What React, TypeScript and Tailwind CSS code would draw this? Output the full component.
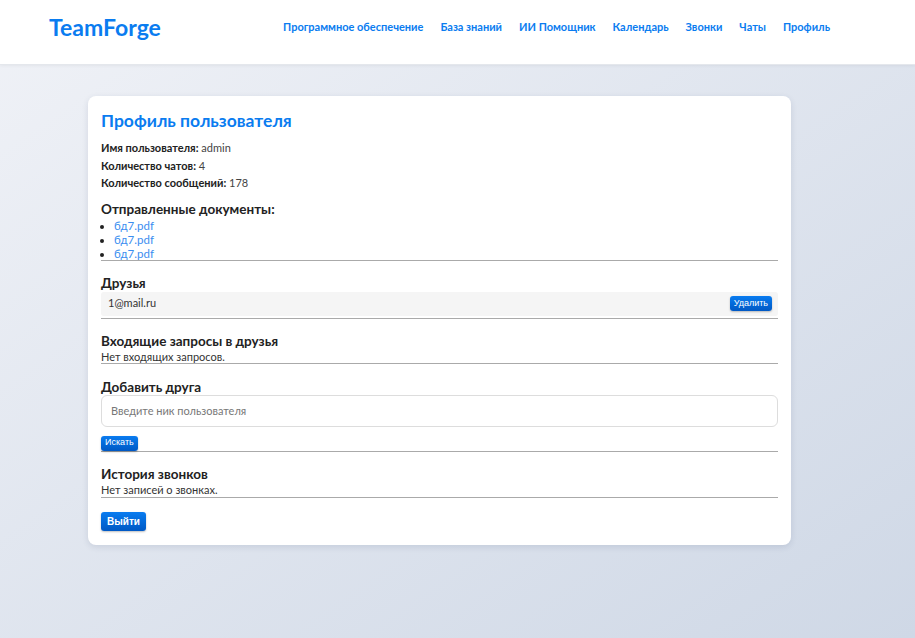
const navItems = ['Программное обеспечение', 'База знаний', 'ИИ Помощник', 'Календарь', 'Звонки', 'Чаты', 'Профиль']

const docs = ['бд7.pdf', 'бд7.pdf', 'бд7.pdf']

const btn =
  'rounded-[3px] bg-gradient-to-b from-[#0a7cf0] to-[#0058c4] text-white font-["Liberation_Sans",Arial,sans-serif] shadow-[0_1px_2px_rgba(0,0,0,0.25)]'

const heading = 'text-[13.5px] font-bold leading-[18px]'

const App = () => {
  return (
    <div className='min-h-[638px] bg-gradient-to-br from-[#f0f2f7] to-[#cfd8e6] font-["Lato","Noto_Sans",sans-serif] text-[#222]'>

      {/* Header */}
      <header className="h-[65px] bg-white border-b border-[#e4e7ec] shadow-[0_1px_3px_rgba(0,0,0,0.05)] flex items-center pl-[49px] pr-[85px]">
        <div className="text-[23px] font-bold text-[#0a7cf0] -mt-[10px] mr-auto">TeamForge</div>
        <nav className="flex items-center gap-[17px] -mt-[10px]">
          {navItems.map((item) => (
            <a key={item} className="text-[11px] font-bold text-[#0a7cf0] cursor-pointer">
              {item}
            </a>
          ))}
        </nav>
      </header>

      {/* Profile card */}
      <div className="pt-[31px] pb-[93px]">
        <div className="ml-[88px] w-[703px] bg-white rounded-[8px] shadow-[0_2px_6px_rgba(30,50,90,0.12)] px-[13px] pt-[13px] pb-[14px]">
          <h1 className="text-[17.5px] font-bold text-[#0a7cf0] leading-[24px]">Профиль пользователя</h1>

          <div className="mt-[6px] text-[11px] leading-[17.5px]">
            <p><b className="font-bold text-[#222]">Имя пользователя:</b> <span className="text-[#444]">admin</span></p>
            <p><b className="font-bold text-[#222]">Количество чатов:</b> <span className="text-[#444]">4</span></p>
            <p><b className="font-bold text-[#222]">Количество сообщений:</b> <span className="text-[#444]">178</span></p>
          </div>

          {/* Documents */}
          <div className="mt-[8px] border-b border-[#aaa]">
            <h2 className={heading}>Отправленные документы:</h2>
            <ul className="mt-[1px] -mb-[1px] list-disc pl-[13px] text-[11.5px] leading-[14px] marker:text-[#222]">
              {docs.map((d, i) => (
                <li key={i} className="text-[#3b8ef0]">
                  <a className="cursor-pointer">{d}</a>
                </li>
              ))}
            </ul>
          </div>

          {/* Friends */}
          <div className="mt-[13px] border-b border-[#aaa] pb-[2px]">
            <h2 className={heading}>Друзья</h2>
            <div className="h-[24px] bg-[#f5f5f5] rounded-[3px] flex items-center justify-between pl-[7px] pr-[6px]">
              <span className="text-[11px] text-[#333]">1@mail.ru</span>
              <button className={`${btn} text-[9px] h-[15px] px-[4px]`}>Удалить</button>
            </div>
          </div>

          {/* Incoming requests */}
          <div className="mt-[13px] border-b border-[#aaa]">
            <h2 className={heading}>Входящие запросы в друзья</h2>
            <p className="text-[11px] leading-[13px] text-[#333]">Нет входящих запросов.</p>
          </div>

          {/* Add friend */}
          <div className="mt-[14px] border-b border-[#aaa]">
            <h2 className={heading}>Добавить друга</h2>
            <input
              placeholder="Введите ник пользователя"
              className="-mt-[1px] block w-full h-[32px] border border-[#ddd] rounded-[6px] px-[9px] text-[11px] placeholder:text-[#777] outline-none"
            />
            <button className={`${btn} mt-[9px] block text-[9px] h-[15px] px-[4px]`}>Искать</button>
          </div>

          {/* Call history */}
          <div className="mt-[13px] border-b border-[#aaa]">
            <h2 className={heading}>История звонков</h2>
            <p className="text-[11px] leading-[14px] text-[#333]">Нет записей о звонках.</p>
          </div>

          <button className={`${btn} mt-[14px] text-[10px] font-bold h-[19px] px-[6px]`}>Выйти</button>
        </div>
      </div>

    </div>
  )
}

export default App
